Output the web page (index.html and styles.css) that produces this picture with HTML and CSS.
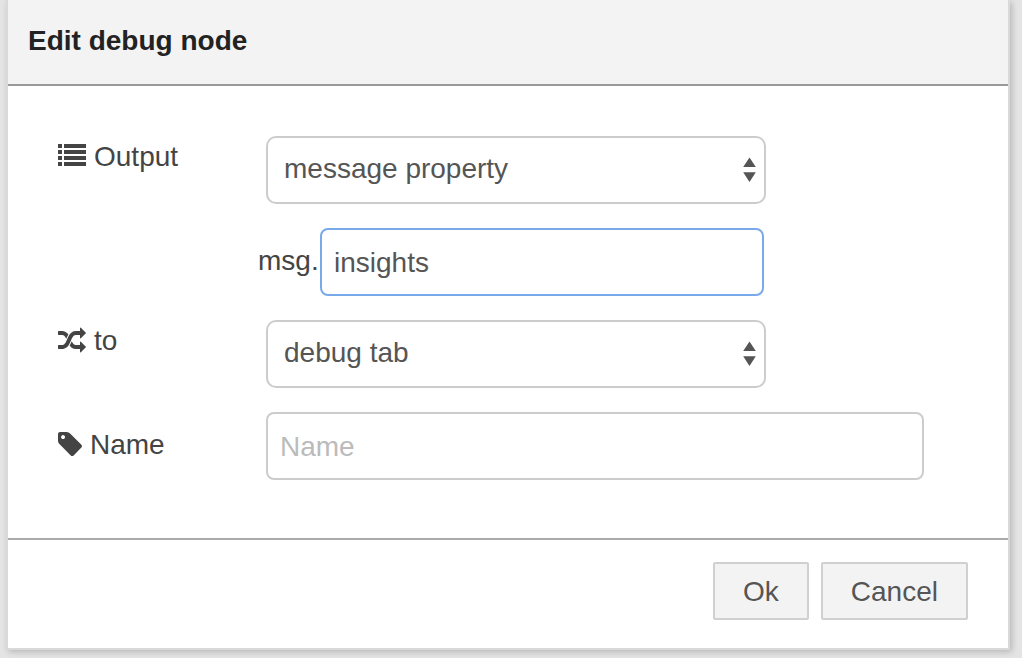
FILE: index.html
```html
<!DOCTYPE html>
<html lang="en">
<head>
<meta charset="utf-8">
<meta name="viewport" content="width=device-width, initial-scale=1">
<title>Edit debug node</title>
<link rel="stylesheet" href="styles.css">
</head>
<body>
<form class="dialog" role="dialog" aria-labelledby="dialog-title">
  <header class="dialog-header">
    <h1 class="dialog-title" id="dialog-title">Edit debug node</h1>
  </header>
  <div class="dialog-body">
    <div class="row">
      <label class="row-label" for="output">
        <svg class="icon-list" viewBox="0 0 28 26" aria-hidden="true"><path d="M0 0h4v4H0zM6 0h22v4H6zM0 6h4v4H0zM6 6h22v4H6zM0 12h4v4H0zM6 12h22v4H6zM0 18h4v4H0zM6 18h22v4H6z"/></svg>
        Output
      </label>
      <div class="select">
        <select class="field" id="output"><option>message property</option><option>complete msg object</option></select>
        <svg class="arrows" viewBox="0 0 14 26" aria-hidden="true"><path d="M6.500 .5l6.300 9.500H.2zM6.500 25L.2 15.300h12.600z"/></svg>
      </div>
    </div>
    <div class="row row-property">
      <label class="prefix" for="property">msg.</label>
      <input class="field field-active" id="property" type="text" value="insights">
    </div>
    <div class="row">
      <label class="row-label" for="target">
        <svg class="icon-random" viewBox="0 0 1792 1792" aria-hidden="true"><path d="M666 481q-60 92-137 273-22-45-37-72.500t-40.500-63.500-51-56.500-63-35-81.500-14.500h-224q-14 0-23-9t-9-23v-192q0-14 9-23t23-9h224q250 0 410 225zm1126 799q0 14-9 23l-320 320q-9 9-23 9-13 0-22.500-9.500t-9.500-22.500v-192q-32 0-85 .5t-81 1-73-1-71-5-64-10.500-63-18.500-58-28.500-59-40-55-53.500-56-69.500q59-93 136-273 22 45 37 72.500t40.500 63.500 51 56.500 63 35 81.500 14.500h256v-192q0-14 9-23t23-9q12 0 24 10l319 319q9 9 9 23zm0-896q0 14-9 23l-320 320q-9 9-23 9-13 0-22.500-9.500t-9.500-22.500v-192h-256q-48 0-87 15t-69 45-51 61.500-45 77.500q-32 62-78 171-29 66-49.500 111t-54 105-64 100-74 83-90 68.500-106.500 42-128 16.500h-224q-14 0-23-9t-9-23v-192q0-14 9-23t23-9h224q48 0 87-15t69-45 51-61.500 45-77.500q32-62 78-171 29-66 49.500-111t54-105 64-100 74-83 90-68.500 106.500-42 128-16.500h256v-192q0-14 9-23t23-9q12 0 24 10l319 319q9 9 9 23z"/></svg>
        to
      </label>
      <div class="select">
        <select class="field" id="target"><option>debug tab</option><option>debug tab and console</option></select>
        <svg class="arrows" viewBox="0 0 14 26" aria-hidden="true"><path d="M6.500 .5l6.300 9.500H.2zM6.500 25L.2 15.300h12.600z"/></svg>
      </div>
    </div>
    <div class="row">
      <label class="row-label row-label-tall" for="name">
        <svg class="icon-tag" viewBox="128 128 1516 1516" preserveAspectRatio="xMidYMin meet" aria-hidden="true"><path d="M576 448q0-53-37.500-90.500t-90.500-37.500-90.500 37.500-37.500 90.500 37.500 90.500 90.500 37.500 90.500-37.500 37.500-90.500zm1067 576q0 53-37 90l-491 492q-39 37-91 37-53 0-90-37l-715-716q-38-37-64.500-101t-26.500-117v-416q0-52 38-90t90-38h416q53 0 117 26.500t102 64.500l715 714q37 39 37 91z"/></svg>
        Name
      </label>
      <input class="field" id="name" type="text" placeholder="Name">
    </div>
  </div>
  <footer class="dialog-footer">
    <button class="button" type="button">Ok</button>
    <button class="button" type="button">Cancel</button>
  </footer>
</form>
</body>
</html>
```

FILE: styles.css
```css
* {
  box-sizing: border-box;
}

body {
  margin: 0;
  padding: 0 12px 8px 6px;
  background: #e4e4e4;
  color: #444;
  font: 28px/40px "Liberation Sans", Arial, sans-serif;
}

.dialog {
  border: 2px solid #d9d9d9;
  border-top: 0;
  border-radius: 0 0 2px 2px;
  background: #fff;
  box-shadow: 2px 2px 6px rgba(0, 0, 0, 0.2);
}

.dialog-header {
  padding: 21px 20px 23px;
  border-bottom: 2px solid #999;
  background: #f3f3f3;
}

.dialog-title {
  margin: 0;
  color: #222;
  font-size: 28px;
  font-weight: bold;
  line-height: 40px;
}

.dialog-body {
  display: flex;
  flex-direction: column;
  gap: 24px;
  padding: 50px 84px 58px 50px;
}

.row {
  display: grid;
  grid-template-columns: 208px 1fr;
  align-items: start;
}

.row-property {
  grid-template-columns: 62px minmax(0, 444px);
  padding-left: 200px;
}

.row-label {
  display: flex;
  align-items: center;
  gap: 8px;
  line-height: 42px;
}

.row-label-tall {
  line-height: 66px;
}

.prefix {
  line-height: 66px;
}

.icon-list {
  width: 28px;
  height: 26px;
  fill: #444;
}

.icon-random {
  width: 28px;
  height: 28px;
  fill: #444;
}

.icon-tag {
  width: 24px;
  height: 26px;
  fill: #444;
}

.field {
  display: block;
  width: 100%;
  height: 68px;
  margin: 0;
  padding: 2px 12px 0;
  border: 2px solid #ccc;
  border-radius: 8px;
  outline: 0;
  background: #fff;
  color: #555;
  font: inherit;
}

.field::placeholder {
  color: #bbb;
  opacity: 1;
}

.field-active {
  border-color: #78aaeb;
}

.select {
  position: relative;
  max-width: 500px;
}

.select .field {
  padding: 0 40px 2px 16px;
  border-radius: 10px;
  appearance: none;
}

.arrows {
  position: absolute;
  top: 21px;
  right: 9px;
  width: 14px;
  height: 26px;
  fill: #555;
  pointer-events: none;
}

.dialog-footer {
  display: flex;
  justify-content: flex-end;
  gap: 12px;
  padding: 22px 40px 28px;
  border-top: 2px solid #aaa;
}

.button {
  height: 58px;
  padding: 2px 28px 0;
  border: 2px solid #d0d0d0;
  border-radius: 2px;
  background: #f3f3f3;
  color: #555;
  font: inherit;
}
```
